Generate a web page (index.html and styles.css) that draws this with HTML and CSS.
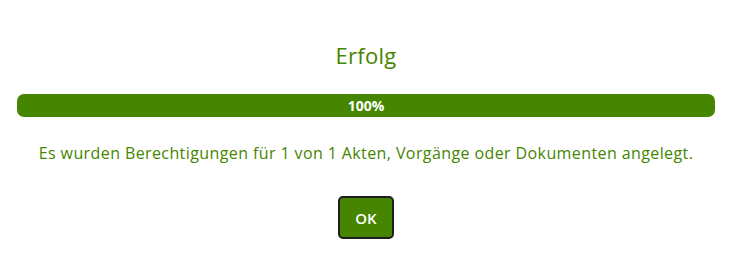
FILE: index.html
```html
<!DOCTYPE html>
<html lang="de">
<head>
    <meta charset="UTF-8">
    <meta name="viewport" content="width=device-width, initial-scale=1.0">
    <link rel="stylesheet" href="styles.css">
    <title>Erfolg</title>
</head>
<body>
    <div class="dialog">
        <h2 class="title">Erfolg</h2>
        <div class="progress">
            <div class="progress-bar" style="width: 100%">100%</div>
        </div>
        <p class="message">Es wurden Berechtigungen für 1 von 1 Akten, Vorgänge oder Dokumenten angelegt.</p>
        <div class="actions">
            <button class="btn">OK</button>
        </div>
    </div>
</body>
</html>
```

FILE: styles.css
```css
body {
    margin: 0;
    background-color: #ffffff;
    font-family: "Open Sans", sans-serif;
    color: #458500;
}

.dialog {
    display: flex;
    flex-direction: column;
    align-items: center;
    padding: 40px 20px 0 17px;
}

.title {
    margin: 0;
    font-size: 22px;
    font-weight: normal;
    line-height: 30px;
    letter-spacing: 0.3px;
}

.progress {
    align-self: stretch;
    margin-top: 24px;
    height: 23px;
    border-radius: 7px;
    background-color: #e6e6e6;
    overflow: hidden;
}

.progress-bar {
    height: 100%;
    background-color: #458500;
    color: #ffffff;
    font-size: 14px;
    font-weight: bold;
    line-height: 23px;
    text-align: center;
}

.message {
    margin: 18px 0 0 0;
    font-size: 16px;
    line-height: 36px;
    letter-spacing: 0.4px;
}

.actions {
    margin-top: 25px;
}

.btn {
    width: 56px;
    height: 43px;
    border: 2px solid #1e1e1e;
    border-radius: 5px;
    background-color: #458500;
    color: #ffffff;
    font-family: inherit;
    font-size: 15px;
    font-weight: 600;
    cursor: pointer;
}
```
